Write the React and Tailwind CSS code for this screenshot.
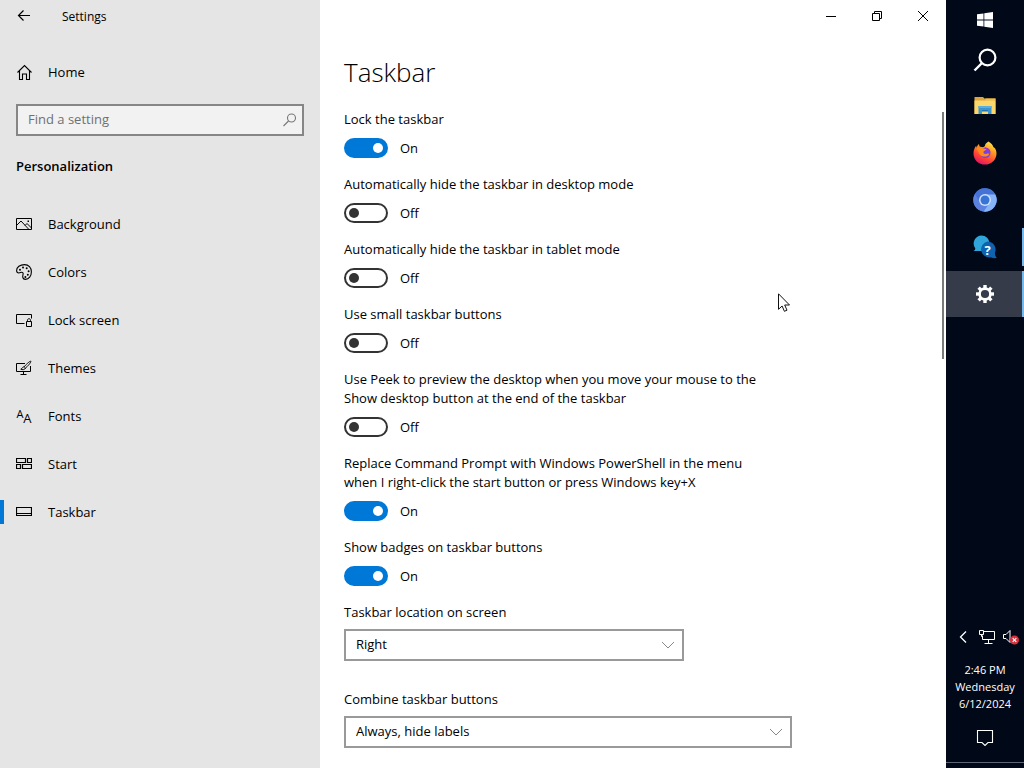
import React, { useState } from 'react';
import clsx from 'clsx';

function Icon({ size = 16, children }) {
    return (
        <svg
            width={size}
            height={size}
            viewBox={`0 0 ${size} ${size}`}
            fill="none"
            stroke="currentColor"
            className="shrink-0"
            aria-hidden="true"
        >
            {children}
        </svg>
    );
}

const BackIcon = () => (
    <Icon>
        <path d="M14 7.5H2.5M7.5 2.5l-5 5 5 5" strokeWidth="1.2" />
    </Icon>
);

const HomeIcon = () => (
    <Icon>
        <path d="M1.5 8.500L8.500 1.500l7 7M3.500 7v8.500h3v-5.500h4v5.500h3V7" strokeWidth="1.1" />
    </Icon>
);

const SearchIcon = () => (
    <Icon>
        <circle cx="9.5" cy="6" r="4" strokeWidth="1.1" />
        <path d="M6.5 9L1.5 14" strokeWidth="1.1" />
    </Icon>
);

const BackgroundIcon = () => (
    <Icon>
        <path d="M.5 2.5h15v11H.5z" />
        <path d="M1 9l4-4 7.5 8M9 9.5l2-2 4.5 4.5" />
        <path d="M11.5 4.5h1.5v1.5h-1.5z" fill="currentColor" stroke="none" />
    </Icon>
);

const ColorsIcon = () => (
    <Icon>
        <path d="M8.5.6C4 .6.6 3 .6 6.6c0 1.6.9 2.4 2.3 2.4 1.2 0 1.9-.8 2.8-.8 1.1 0 1.6.9 1.4 2-.3 1.4-.6 2.2-.3 3.3.3 1.2 1.3 1.9 2.6 1.9 3.5 0 6-3.4 6-7.6C15.4 3.5 12.6.6 8.5.6z" strokeWidth="1.1" />
        <g fill="currentColor" stroke="none">
            <circle cx="4" cy="5.8" r="1" />
            <circle cx="7" cy="3.6" r="1" />
            <circle cx="10.7" cy="4.2" r="1" />
            <circle cx="12.6" cy="7.3" r="1" />
            <circle cx="11.8" cy="10.8" r="1" />
            <circle cx="9.4" cy="13" r="1" />
        </g>
    </Icon>
);

const LockScreenIcon = () => (
    <Icon>
        <path d="M8.5 11.5h-8v-9h15v4" />
        <path d="M10.5 9.5h5v5h-5z" />
        <path d="M11.5 9.5V8.3c0-1 .6-1.6 1.5-1.6s1.5.6 1.5 1.6v1.2" />
    </Icon>
);

const ThemesIcon = () => (
    <Icon>
        <path d="M9 3.5H.5v8h14V6M7.5 11.5v2.5M4.5 14.5h6" />
        <path d="M14.8 1.2c-.8-.4-5.6 4-6.6 5.6l1.3 1.2c1.8-1.2 6-6 5.3-6.8z" />
        <path d="M8.2 6.8c-1.7 0-2 1.7-3.4 2.4 1.5.8 4.2.6 4.7-1.2" />
    </Icon>
);

const FontsIcon = () => (
    <span className="w-4 shrink-0 flex items-end justify-center leading-4" aria-hidden="true">
        <span className="pb-1 text-[11px]">A</span>
        <span className="text-[13px]">A</span>
    </span>
);

const StartIcon = () => (
    <Icon>
        <path d="M.5 2.5h9v4h-9zM11.5 2.5h4v4h-4zM.5 8.500h4v4h-4zM6.500 8.500h9v4h-9z" strokeWidth="1.200" />
    </Icon>
);

const TaskbarIcon = () => (
    <Icon>
        <path d="M.5 3.500h15v8H.5zM.5 9.500h15" strokeWidth="1.200" />
    </Icon>
);

const NAV = [
    { label: 'Background', icon: BackgroundIcon },
    { label: 'Colors', icon: ColorsIcon },
    { label: 'Lock screen', icon: LockScreenIcon },
    { label: 'Themes', icon: ThemesIcon },
    { label: 'Fonts', icon: FontsIcon },
    { label: 'Start', icon: StartIcon },
    { label: 'Taskbar', icon: TaskbarIcon, active: true },
];

const SWITCHES = [
    { id: 'lock', label: 'Lock the taskbar', on: true },
    { id: 'hide-desktop', label: 'Automatically hide the taskbar in desktop mode', on: false },
    { id: 'hide-tablet', label: 'Automatically hide the taskbar in tablet mode', on: false },
    { id: 'small', label: 'Use small taskbar buttons', on: false },
    {
        id: 'peek',
        label: 'Use Peek to preview the desktop when you move your mouse to the Show desktop button at the end of the taskbar',
        on: false,
    },
    {
        id: 'powershell',
        label: 'Replace Command Prompt with Windows PowerShell in the menu when I right-click the start button or press Windows key+X',
        on: true,
    },
    { id: 'badges', label: 'Show badges on taskbar buttons', on: true },
];

function Sidebar() {
    return (
        <aside className="w-80 shrink-0 bg-[#e5e5e5] flex flex-col">
            <div className="h-8 flex items-center">
                <button type="button" aria-label="Back" className="w-12 h-8 flex items-center justify-center">
                    <BackIcon />
                </button>
                <span className="ml-3.5 pt-0.5 text-xs">Settings</span>
            </div>
            <a href="#home" className="mt-4 h-12 px-4 flex items-center gap-4">
                <HomeIcon />
                <span className="pt-0.5">Home</span>
            </a>
            <div className="relative mx-4 mt-2">
                <input
                    type="text"
                    aria-label="Find a setting"
                    placeholder="Find a setting"
                    className="w-full h-8 border-2 border-[#868686] bg-[#f2f2f2] pl-2.5 pr-8 pb-0.5 placeholder:text-[#707070] outline-none"
                />
                <span className="absolute right-1.5 top-2 text-[#777777]">
                    <SearchIcon />
                </span>
            </div>
            <h2 className="mt-5 px-4 leading-5 font-semibold">Personalization</h2>
            <nav className="mt-6">
                {NAV.map(({ label, icon: NavIcon, active }) => (
                    <a key={label} href={`#${label}`} className="h-12 pr-4 flex items-center">
                        <span className={clsx('w-1 h-6 mr-3', active && 'bg-[#0078d7]')} />
                        <NavIcon />
                        <span className="ml-4 pt-0.5">{label}</span>
                    </a>
                ))}
            </nav>
        </aside>
    );
}

function Toggle({ id, label, on }) {
    const [checked, setChecked] = useState(on);
    return (
        <div className="pb-[17px]">
            <label htmlFor={id} className="block leading-[19px] max-w-[428px]">{label}</label>
            <div className="mt-[9px] h-5 flex items-center gap-3">
                <input
                    id={id}
                    type="checkbox"
                    role="switch"
                    checked={checked}
                    onChange={(e) => setChecked(e.target.checked)}
                    className="appearance-none w-11 h-5 shrink-0 rounded-full border-2 border-[#333333] px-[3px] flex items-center before:content-[''] before:size-2.5 before:rounded-full before:bg-[#333333] checked:bg-[#0078d7] checked:border-[#0078d7] checked:justify-end checked:before:bg-white"
                />
                <span className="pt-0.5">{checked ? 'On' : 'Off'}</span>
            </div>
        </div>
    );
}

function Dropdown({ id, label, options, className }) {
    return (
        <div className={clsx('mb-[29px] w-full', className)}>
            <label htmlFor={id} className="block leading-[19px]">{label}</label>
            <div className="relative mt-[7px]">
                <select id={id} className="appearance-none w-full h-8 border-2 border-[#999999] bg-white pl-2.5 pr-8">
                    {options.map((option) => (
                        <option key={option}>{option}</option>
                    ))}
                </select>
                <span className="absolute right-2 top-2 text-[#888888] pointer-events-none">
                    <Icon>
                        <path d="M2 5l6 6 6-6" />
                    </Icon>
                </span>
            </div>
        </div>
    );
}

function WindowControls() {
    return (
        <div className="h-8 shrink-0 flex justify-end">
            <button type="button" aria-label="Minimize" className="w-[46px] h-8 flex items-center justify-center">
                <Icon size={10}>
                    <path d="M0 5.5h10" />
                </Icon>
            </button>
            <button type="button" aria-label="Restore" className="w-[46px] h-8 flex items-center justify-center">
                <Icon size={10}>
                    <path d="M.5 2.5h7v7h-7zM2.5 2.5v-2h7v7h-2" />
                </Icon>
            </button>
            <button type="button" aria-label="Close" className="w-[46px] h-8 flex items-center justify-center">
                <Icon size={10}>
                    <path d="M0 0l10 10M10 0L0 10" />
                </Icon>
            </button>
        </div>
    );
}

function Content() {
    return (
        <main className="relative flex-1 min-w-0 bg-white flex flex-col">
            <WindowControls />
            <div className="flex-1 min-h-0 overflow-hidden px-6">
                <h1 className="mt-5 mb-[18px] text-[26px] leading-10 font-light">Taskbar</h1>
                {SWITCHES.map((item) => (
                    <Toggle key={item.id} {...item} />
                ))}
                <Dropdown
                    id="location"
                    label="Taskbar location on screen"
                    options={['Right', 'Left', 'Top', 'Bottom']}
                    className="max-w-[340px]"
                />
                <Dropdown
                    id="combine"
                    label="Combine taskbar buttons"
                    options={['Always, hide labels', 'When taskbar is full', 'Never']}
                    className="max-w-[448px]"
                />
            </div>
            <div className="absolute right-0.5 top-28 w-0.5 h-[247px] bg-[#7a7a7a]" />
        </main>
    );
}

const WindowsLogo = () => (
    <svg width="16" height="16" viewBox="0 0 16 16" fill="#ffffff" aria-hidden="true">
        <path d="M0 2.3l6.5-.9v6.200H0zM7.300 1.300L16 0v7.600H7.300zM0 8.400h6.500v6.200L0 13.700zM7.300 8.400H16V16l-8.700-1.300z" />
    </svg>
);

const TaskbarSearch = () => (
    <svg width="24" height="24" viewBox="0 0 24 24" fill="none" stroke="#ffffff" aria-hidden="true">
        <circle cx="14.5" cy="9.500" r="7.900" strokeWidth="2.200" />
        <path d="M9 15L1.500 22.500" strokeWidth="2.400" />
    </svg>
);

const ExplorerIcon = () => (
    <svg width="24" height="24" viewBox="0 0 24 24" aria-hidden="true">
        <path d="M1.500 3h8.500l1.500 1.500h11V20h-21z" fill="#dea63a" />
        <path d="M12.500 4.500h10v2h-10z" fill="#f0c04c" />
        <path d="M1.500 6.500h21V20h-21z" fill="#fbd76c" />
        <path d="M5.500 20v-8h13v8h-3.500v-3h-6v3z" fill="#3d95cf" />
        <path d="M5.500 12h13v2h-13z" fill="#5aafe0" />
        <path d="M9 16h6v1.500H9z" fill="#2475b0" />
    </svg>
);

const FirefoxIcon = () => (
    <svg width="24" height="24" viewBox="0 0 24 24" aria-hidden="true">
        <defs>
            <linearGradient id="ff-body" x1="0.8" y1="0" x2="0.3" y2="1">
                <stop offset="0" stopColor="#fff04a" />
                <stop offset="0.35" stopColor="#ff9a22" />
                <stop offset="0.7" stopColor="#ff4238" />
                <stop offset="1" stopColor="#e21463" />
            </linearGradient>
        </defs>
        <path d="M15.500.5c3 1.800 4.500 4 4.800 5.500.8.300 1.500 1 1.800 1.600 1 1.700 1.400 3.500 1.400 5.100C23.300 19 18.300 23.600 12 23.600 5.500 23.600.5 18.600.5 12.400c0-3 1-5.600 2.700-7.600l.3 1.900C4 5.300 4.700 4 6 2.900c0 1 .2 1.700.7 2.300 1.700-.4 3.200-.2 4.500.4 .8-2.300 2.300-4 4.300-5.100z" fill="url(#ff-body)" />
        <path d="M10 6.200c1-.6 2-1.200 2.200-2.400-2.800-1-4.700.2-5.700 1.600z" fill="#010818" />
        <circle cx="12.300" cy="11.800" r="5.200" fill="#7542e5" />
        <path d="M12 6.600c3 .2 5 2 5.300 4.500-1.500-1.800-3-2-5-1.500z" fill="#a52fc4" />
        <path d="M3.500 7c2-1.200 4.500-1 6.500 0 .8.800 2 1 3.500 1.100-.2 1.400-2.500 1.500-3 2.600-.3 1.300.5 2.400 2.500 2.200 1.400-.2 2.300-.6 3.300 0-1.200 2.300-3.500 3-5.800 2.600C6.300 15 5.300 10.500 3.500 7z" fill="#ff8a1f" />
    </svg>
);

const ChromiumIcon = () => (
    <svg width="24" height="24" viewBox="0 0 24 24" aria-hidden="true">
        <circle cx="12" cy="12" r="11.7" fill="#4a84e8" />
        <path d="M12 12L1.900 6.100A11.700 11.700 0 0 0 10.700 23.600L15 16z" fill="#5b82e0" />
        <path d="M12 6.500h10.300A11.700 11.700 0 0 0 1.900 6.100L7 14.500z" fill="#4672d6" />
        <path d="M12 6.500h10.300a11.700 11.700 0 0 1-11.600 17.100L16.500 15z" fill="#86b4f6" />
        <circle cx="12" cy="12" r="6" fill="#cfe0fb" />
        <circle cx="12" cy="12" r="4.500" fill="#3873d6" />
    </svg>
);

const HelpIcon = () => (
    <svg width="24" height="24" viewBox="0 0 24 24" aria-hidden="true">
        <path d="M8.500.5a8 8 0 0 1 8 8 8 8 0 0 1-8 7.500H.5c1.500-1 2-2 1.600-3A8 8 0 0 1 8.500.5z" fill="#2fa5d9" />
        <path d="M14.500 6.500a8 8 0 0 1 7.500 11c-.2 2 .5 4 1.800 5.500-2 .3-4.300.2-6-.8a8 8 0 1 1-3.300-15.700z" fill="#0f62ae" />
        <text x="14.500" y="19.500" textAnchor="middle" fontSize="13" fontWeight="700" fill="#ffffff" fontFamily="Open Sans, sans-serif">?</text>
    </svg>
);

const GEAR_TEETH = [0, 45, 90, 135, 180, 225, 270, 315];

const GearIcon = () => (
    <svg width="20" height="20" viewBox="0 0 20 20" aria-hidden="true">
        <circle cx="10" cy="10" r="5.4" fill="none" stroke="#ffffff" strokeWidth="2.6" />
        {GEAR_TEETH.map((deg) => (
            <path key={deg} d="M8.300 1h3.400v3.500H8.300z" fill="#ffffff" transform={`rotate(${deg} 10 10)`} />
        ))}
    </svg>
);

const APPS = [
    { label: 'File Explorer', icon: ExplorerIcon },
    { label: 'Firefox', icon: FirefoxIcon },
    { label: 'Chromium', icon: ChromiumIcon },
    { label: 'Get Help', icon: HelpIcon, running: true },
    { label: 'Settings', icon: GearIcon, running: true, active: true },
];

function SystemTaskbar() {
    return (
        <aside className="w-[78px] shrink-0 bg-[#010818] text-white flex flex-col">
            <button type="button" aria-label="Start" className="h-10 flex items-center justify-center">
                <WindowsLogo />
            </button>
            <button type="button" aria-label="Search" className="h-10 flex items-center justify-center">
                <TaskbarSearch />
            </button>
            <div className="mt-[3px] flex flex-col gap-px">
                {APPS.map(({ label, icon: AppIcon, running, active }) => (
                    <button
                        key={label}
                        type="button"
                        aria-label={label}
                        className={clsx('relative h-[46px] flex items-center justify-center', active && 'bg-[#353b49]')}
                    >
                        <AppIcon />
                        {running && (
                            <span className={clsx('absolute right-0 w-0.5 bg-[#76b9ed]', active ? 'inset-y-0' : 'inset-y-1')} />
                        )}
                    </button>
                ))}
            </div>
            <div className="mt-auto flex flex-col items-center">
                <div className="w-full h-5 pl-[9px] flex items-center gap-2">
                    <button type="button" aria-label="Show hidden icons">
                        <Icon>
                            <path d="M11 2.500L5.500 8l5.500 5.500" strokeWidth="1.300" />
                        </Icon>
                    </button>
                    <button type="button" aria-label="Network">
                        <Icon>
                            <path d="M5 2.500h10.500v8h-12v-4M9.500 10.500v3.500M5.500 14.500h8M.5 1.500h4v4h-4zM2.500 5.500v2h1" />
                        </Icon>
                    </button>
                    <button type="button" aria-label="Volume muted">
                        <Icon>
                            <path d="M.5 5.500h2.500l4-4v12l-4-4H.5z" />
                            <circle cx="11.500" cy="11" r="4.500" fill="#d9303e" stroke="none" />
                            <path d="M9.700 9.200l3.600 3.600M13.300 9.200l-3.600 3.600" strokeWidth="1.200" />
                        </Icon>
                    </button>
                </div>
                <button type="button" className="mt-3.5 text-[11px] leading-[17px] text-center">
                    2:46 PM<br />Wednesday<br />6/12/2024
                </button>
                <button type="button" aria-label="Notifications" className="mt-2 h-[42px] pt-2 w-full flex justify-center">
                    <Icon size={18}>
                        <path d="M1.500 2.500h15v12h-4.500l-3 3-3-3H1.500z" strokeWidth="1.100" />
                    </Icon>
                </button>
                <div className="w-full h-1.5 border-t border-[#5f6673]" />
            </div>
        </aside>
    );
}

function Cursor() {
    return (
        <svg width="12" height="20" viewBox="0 0 12 20" className="absolute left-[778px] top-[293px] pointer-events-none" aria-hidden="true">
            <path d="M.5.8v15.500l3.600-3.300 2.300 5.300 2.600-1.100-2.300-5.200h4.800z" fill="#ffffff" stroke="#111111" />
        </svg>
    );
}

export default function App() {
    return (
        <div className="relative h-screen flex overflow-hidden text-[13px] text-black font-['Open_Sans','Noto_Sans',sans-serif]">
            <Sidebar />
            <Content />
            <SystemTaskbar />
            <Cursor />
        </div>
    );
}
